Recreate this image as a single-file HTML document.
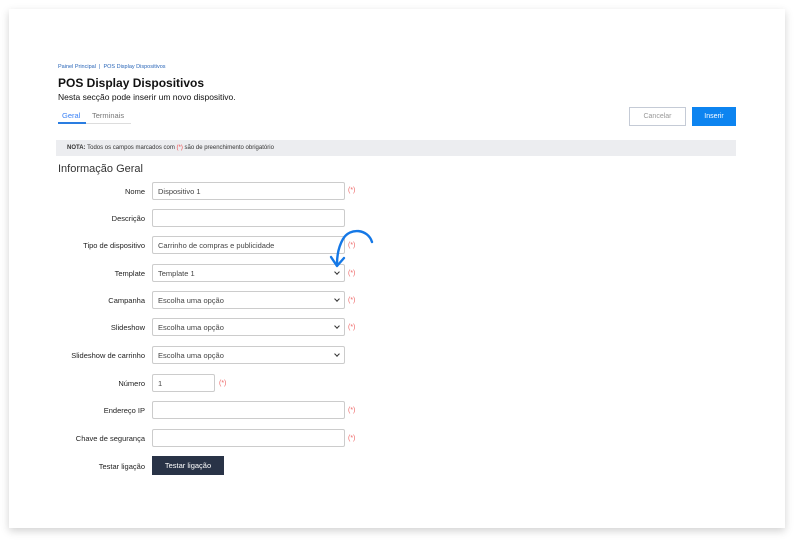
<!DOCTYPE html><html><head><meta charset="utf-8"><style>
*{box-sizing:border-box;margin:0;padding:0}
body{width:800px;height:543px;background:#fff;font-family:"Liberation Sans",sans-serif;position:relative;overflow:hidden;color:#222}
.card{position:absolute;left:9px;top:9px;width:776px;height:519px;background:#fff;box-shadow:0 3px 8px rgba(0,0,0,.18)}
.a{position:absolute;white-space:nowrap}
.lbl{position:absolute;right:655px;font-size:7.5px;color:#222;text-align:right}
.in{position:absolute;left:152px;width:193px;height:18px;border:1px solid #ccc;border-radius:2px;font-size:7.5px;color:#444;padding-left:5px;display:flex;align-items:center;background:#fff}
.sel:after{content:"";position:absolute;right:5px;top:5px;width:3px;height:3px;border-right:1.2px solid #333;border-bottom:1.2px solid #333;transform:rotate(45deg)}
.req{position:absolute;left:348px;font-size:7px;color:#e66}
</style></head><body>
<div class="card"></div>
<div class="a" style="left:58px;top:64px;font-size:5.5px;color:#2a66b8">Painel Principal &nbsp;|&nbsp; POS Display Dispositivos</div>
<div class="a" style="left:58px;top:76px;font-size:12px;font-weight:bold;color:#111">POS Display Dispositivos</div>
<div class="a" style="left:58px;top:92px;font-size:8.5px;color:#111">Nesta secção pode inserir um novo dispositivo.</div>
<div class="a" style="left:62px;top:111px;font-size:7.5px;color:#3b82f6">Geral</div>
<div class="a" style="left:92px;top:111px;font-size:7.5px;color:#777">Terminais</div>
<div class="a" style="left:58px;top:123px;width:73px;height:1px;background:#ddd"></div>
<div class="a" style="left:58px;top:122px;width:28px;height:2px;background:#2a7de1"></div>
<div class="a" style="left:629px;top:107px;width:57px;height:19px;border:1px solid #c5cbd6;font-size:7px;color:#999;text-align:center;line-height:17px">Cancelar</div>
<div class="a" style="left:692px;top:107px;width:44px;height:19px;background:#0d84f0;font-size:7px;color:#fff;text-align:center;line-height:19px">Inserir</div>
<div class="a" style="left:56px;top:140px;width:680px;height:16px;background:#ecedf0;font-size:6px;color:#333;line-height:16px;padding-left:11px"><b>NOTA:</b> Todos os campos marcados com <span style="color:#e44">(*)</span> são de preenchimento obrigatório</div>
<div class="a" style="left:58px;top:163px;font-size:11px;color:#333">Informação Geral</div>

<div class="lbl" style="top:187px">Nome</div><div class="in" style="top:182px">Dispositivo 1</div><div class="req" style="top:187px">(*)</div>
<div class="lbl" style="top:214px">Descrição</div><div class="in" style="top:209px"></div>
<div class="lbl" style="top:241px">Tipo de dispositivo</div><div class="in" style="top:236px">Carrinho de compras e publicidade</div><div class="req" style="top:242px">(*)</div>
<div class="lbl" style="top:269px">Template</div><div class="in sel" style="top:264px">Template 1</div><div class="req" style="top:270px">(*)</div>
<div class="lbl" style="top:296px">Campanha</div><div class="in sel" style="top:291px">Escolha uma opção</div><div class="req" style="top:297px">(*)</div>
<div class="lbl" style="top:323px">Slideshow</div><div class="in sel" style="top:318px">Escolha uma opção</div><div class="req" style="top:324px">(*)</div>
<div class="lbl" style="top:351px">Slideshow de carrinho</div><div class="in sel" style="top:346px">Escolha uma opção</div>
<div class="lbl" style="top:379px">Número</div><div class="in" style="top:374px;width:63px">1</div><div class="req" style="top:380px;left:219px">(*)</div>
<div class="lbl" style="top:406px">Endereço IP</div><div class="in" style="top:401px"></div><div class="req" style="top:407px">(*)</div>
<div class="lbl" style="top:434px">Chave de segurança</div><div class="in" style="top:429px"></div><div class="req" style="top:435px">(*)</div>
<div class="lbl" style="top:462px">Testar ligação</div>
<div class="a" style="left:152px;top:456px;width:72px;height:19px;background:#293347;color:#fff;font-size:7.5px;text-align:center;line-height:19px">Testar ligação</div>

<svg class="a" style="left:0;top:0" width="800" height="543"><path d="M372,242 C368,229 350,227 343,239 C339,246 337,254 337,264" fill="none" stroke="#1578e6" stroke-width="2.4" stroke-linecap="round"/><path d="M331,257 L337,266 L344,258" fill="none" stroke="#1578e6" stroke-width="2.4" stroke-linecap="round" stroke-linejoin="round"/></svg>
</body></html>
